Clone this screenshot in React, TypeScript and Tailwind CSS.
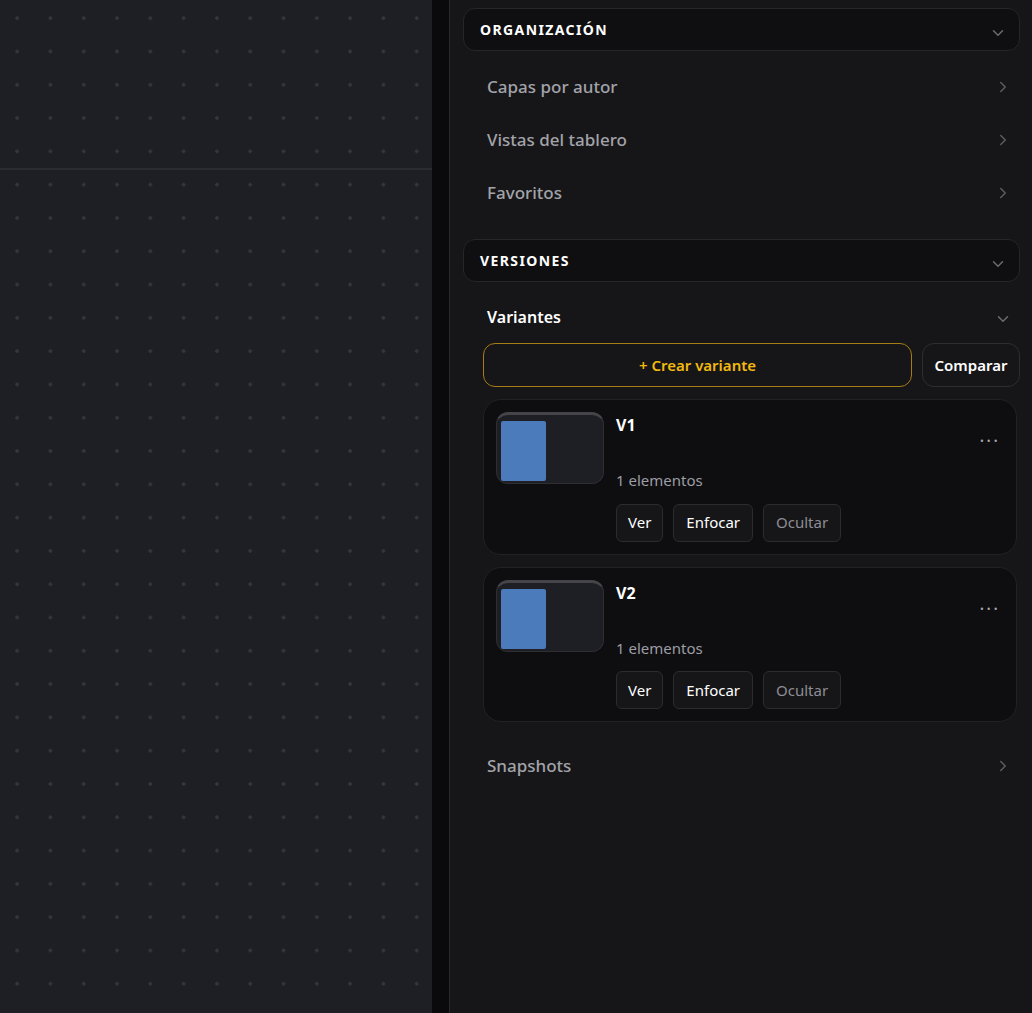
import { ChevronDown, ChevronRight } from "lucide-react";

const font = { fontFamily: '"Noto Sans", "Open Sans", sans-serif' };

function SectionHeader({ title }: { title: string }) {
  return (
    <div className="flex h-[43px] items-center justify-between rounded-xl border border-[#26262a] bg-[#0f0f11] pl-[16px] pr-[12px]">
      <span className="text-[14px] font-bold tracking-[1.4px] text-white">{title}</span>
      <ChevronDown className="mt-[6px] h-[18px] w-[18px] text-[#6b6b72]" strokeWidth={2} />
    </div>
  );
}

function NavRow({ label }: { label: string }) {
  return (
    <div className="flex h-[53px] items-center justify-between pl-[24px] pr-[8px]">
      <span className="text-[17px] font-medium text-[#a3a3aa]">{label}</span>
      <ChevronRight className="h-[18px] w-[18px] text-[#5c5c62]" strokeWidth={2} />
    </div>
  );
}

function VariantCard({ name }: { name: string }) {
  return (
    <div className="flex rounded-[18px] border border-[#222226] bg-[#0e0e10] pb-[12px] pl-[12px] pr-[16px] pt-[12px]">
      <div className="h-[72px] w-[108px] shrink-0 rounded-xl border border-[#2e2e33] border-t-[#444449] border-t-[3px] bg-[#1e1f24] pl-[4px] pt-[6px]">
        <div className="h-[60px] w-[45px] rounded-[2px] bg-[#4b7bbb]" />
      </div>
      <div className="ml-[12px] flex flex-1 flex-col">
        <div className="flex items-start justify-between">
          <span className="mt-[1px] text-[16px] font-bold text-white">{name}</span>
          <span className="mt-[19px] text-[18px] leading-none tracking-[2px] text-[#a6a6ad]">···</span>
        </div>
        <span className="mt-[20px] text-[15px] text-[#9d9da4]">1 elementos</span>
        <div className="mt-[12px] flex gap-[10px]">
          <button className="h-[38px] rounded-md border border-[#2c2c30] bg-[#161618] px-[11px] text-[15px] text-white">Ver</button>
          <button className="h-[38px] rounded-md border border-[#2c2c30] bg-[#161618] px-[12px] text-[15px] text-white">Enfocar</button>
          <button className="h-[38px] rounded-md border border-[#2c2c30] bg-[#161618] px-[12px] text-[15px] text-[#8d8d93]">Ocultar</button>
        </div>
      </div>
    </div>
  );
}

export default function App() {
  return (
    <div className="flex h-screen w-full overflow-hidden bg-[#161618]" style={font}>
      <div
        className="flex h-full w-[432px] shrink-0 flex-col bg-[#1e1f24]"
        style={{
          backgroundImage: "radial-gradient(circle, #35363c 1.5px, transparent 1.9px)",
          backgroundSize: "33.3px 33.3px",
          backgroundPosition: "0.5px 1.5px",
        }}
      >
        <div className="h-[170px] border-b-2 border-[#2b2c31]" />
      </div>
      <div className="h-full w-[18px] shrink-0 border-r border-[#2a2a2e] bg-[#0a0a0c]" />
      <div className="flex flex-1 flex-col pl-[13px] pr-[12px] pt-[8px]">
        <SectionHeader title="ORGANIZACIÓN" />
        <div className="mt-[9px]">
          <NavRow label="Capas por autor" />
          <NavRow label="Vistas del tablero" />
          <NavRow label="Favoritos" />
        </div>
        <div className="mt-[20px]">
          <SectionHeader title="VERSIONES" />
        </div>
        <div className="mt-[20px] flex h-[30px] items-center justify-between pl-[24px] pr-[8px]">
          <span className="text-[16px] font-semibold text-white">Variantes</span>
          <ChevronDown className="mt-[4px] h-[18px] w-[18px] text-[#6b6b72]" strokeWidth={2} />
        </div>
        <div className="mt-[11px] flex gap-[10px] pl-[20px]">
          <button className="h-[44px] flex-1 rounded-xl border border-[#a57d14] text-[15px] font-semibold text-[#f2b90f]">
            + Crear variante
          </button>
          <button className="h-[44px] w-[98px] rounded-xl border border-[#2e2e32] text-[15px] font-semibold text-white">
            Comparar
          </button>
        </div>
        <div className="mt-[12px] flex flex-col gap-[12px] pl-[20px] pr-[3px]">
          <VariantCard name="V1" />
          <VariantCard name="V2" />
        </div>
        <div className="mt-[17px]">
          <NavRow label="Snapshots" />
        </div>
      </div>
    </div>
  );
}
